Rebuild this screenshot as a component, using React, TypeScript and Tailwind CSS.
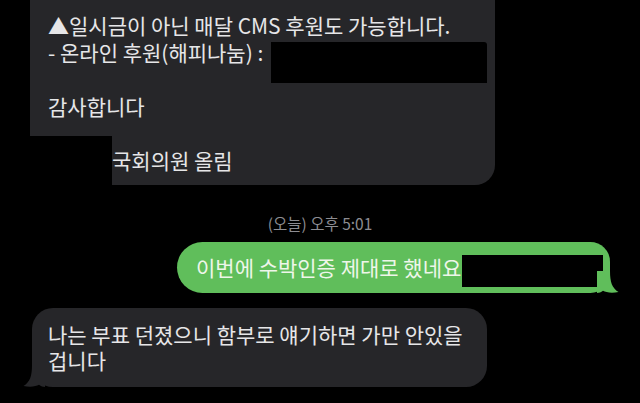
const Tail = ({ color, flip }: { color: string; flip?: boolean }) => (
  <svg
    width="22"
    height="22"
    viewBox="0 0 22 22"
    className={flip ? "absolute -left-[9px] bottom-0 -scale-x-100" : "absolute -right-[9px] bottom-0"}
  >
    <path
      d="M0 0 H13 C13 11 15 17 21.5 21 C15 22.3 9 21.6 6 19.8 C4 21.2 2 22 0 22 Z"
      fill={color}
    />
  </svg>
);

const App = () => {
  return (
    <div
      className="w-[640px] h-[403px] overflow-hidden bg-black flex flex-col text-[#e6e6e8]"
      style={{ fontFamily: '"Noto Sans CJK KR", "Noto Sans", sans-serif' }}
    >
      {/* 받은 메시지 (위쪽, 잘림) */}
      <div className="relative -mt-[20px] ml-[30px] w-[465px] rounded-[20px] bg-[#262629] pt-[32px] pb-[11px] pl-[18px] text-[21px] leading-[27px]">
        <div>▲일시금이 아닌 매달 CMS 후원도 가능합니다.</div>
        <div>- 온라인 후원(해피나눔) :</div>
        <div>&nbsp;</div>
        <div>감사합니다</div>
        <div>&nbsp;</div>
        <div className="pl-[64px]">국회의원 올림</div>
        {/* 가림 처리 */}
        <div className="absolute left-[241px] top-[62px] w-[216px] h-[41px] bg-black rounded-tr-[3px]" />
        <div className="absolute -left-[30px] top-[156px] w-[112px] h-[50px] bg-black" />
      </div>

      {/* 시간 */}
      <div className="mt-[28px] text-center text-[15.5px] leading-[20px] text-[#8d8d92]">(오늘) 오후 5:01</div>

      {/* 보낸 메시지 */}
      <div className="relative self-end mt-[9px] mr-[30px] h-[51px] w-[433px] flex items-center rounded-l-[26px] rounded-r-[20px] bg-[#60be5b] pl-[19px] text-[21px] text-[#eef6ea]">
        이번에 수박인증 제대로 했네요
        <div className="absolute left-[285px] top-[13px] w-[141px] h-[32px] bg-black" />
        <Tail color="#60be5b" />
      </div>

      {/* 받은 메시지 */}
      <div className="relative mt-[15px] ml-[32px] w-[455px] rounded-[21px] bg-[#262629] pt-[13px] pb-[14px] pl-[16px] pr-[10px] text-[21px] leading-[26px]">
        나는 부표 던졌으니 함부로 얘기하면 가만 안있을 겁니다
        <Tail color="#262629" flip />
      </div>
    </div>
  );
};

export default App;
